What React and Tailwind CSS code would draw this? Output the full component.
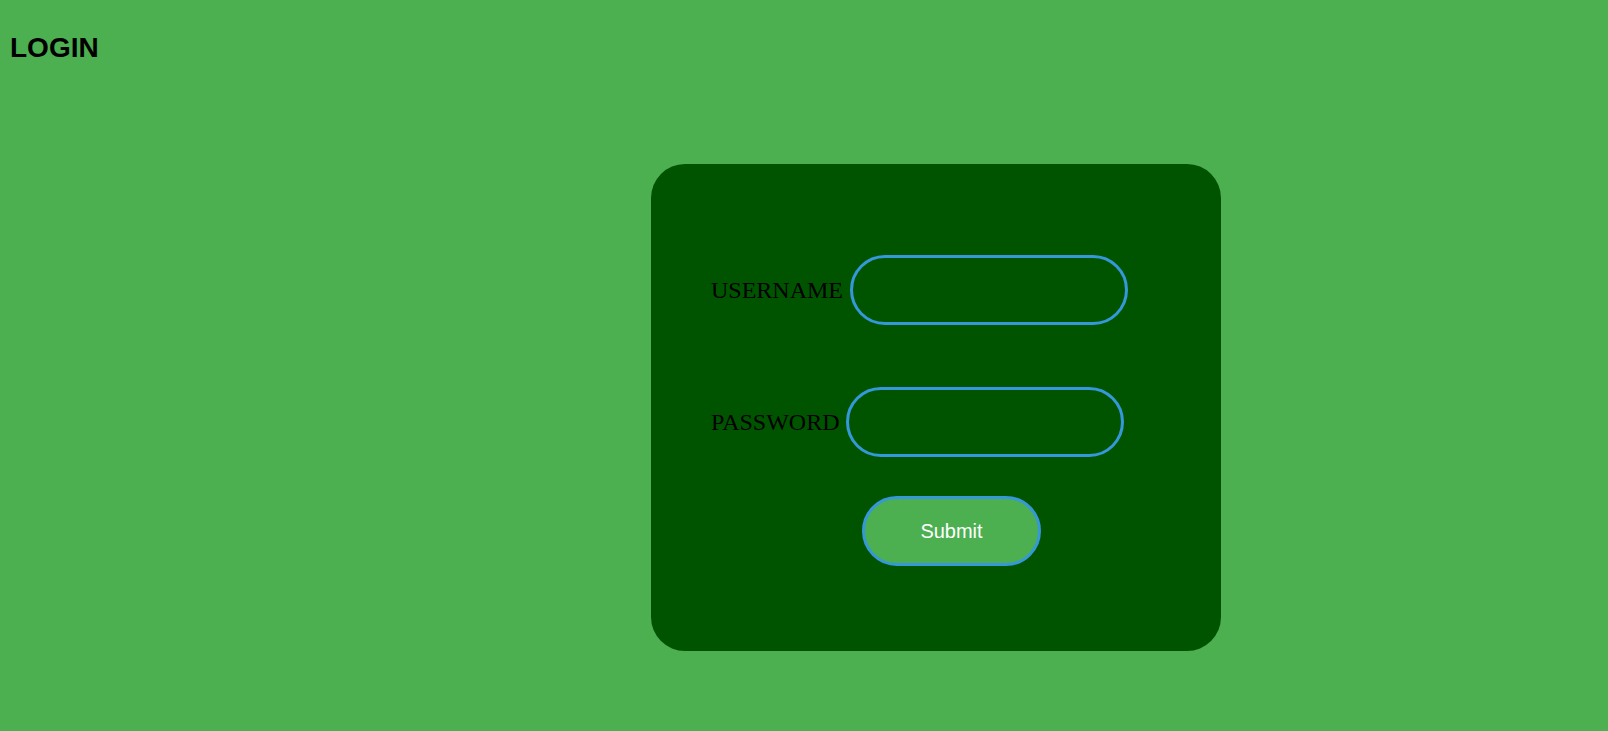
export default function App() {
  return (
    <div className="min-h-screen bg-[#4caf50] overflow-hidden">
      <h1 className="pl-[10px] pt-[32px] text-[28px] leading-[32px] font-bold text-black font-['Liberation_Sans',Arial,sans-serif]">
        LOGIN
      </h1>
      <form
        className="ml-[651px] mt-[100px] w-[570px] rounded-[34px] bg-[#005400] pl-[60px] pt-[91px] pb-[85px] font-['Liberation_Serif','Times_New_Roman',serif]"
        onSubmit={(e) => e.preventDefault()}
      >
        <div className="flex items-center gap-[7px]">
          <label htmlFor="username" className="text-[24px] text-black">
            USERNAME
          </label>
          <input
            id="username"
            type="text"
            className="w-[278px] h-[70px] rounded-full border-[3px] border-[#3498db] bg-transparent px-5 text-[20px] text-white outline-none"
          />
        </div>
        <div className="mt-[62px] flex items-center gap-[6px]">
          <label htmlFor="password" className="text-[24px] text-black">
            PASSWORD
          </label>
          <input
            id="password"
            type="password"
            className="w-[278px] h-[70px] rounded-full border-[3px] border-[#3498db] bg-transparent px-5 text-[20px] text-white outline-none"
          />
        </div>
        <button
          type="submit"
          className="mt-[39px] ml-[151px] block w-[179px] h-[70px] rounded-full border-[3px] border-[#3498db] bg-[#4caf50] text-[20px] text-white font-['Liberation_Sans',Arial,sans-serif]"
        >
          Submit
        </button>
      </form>
    </div>
  );
}
